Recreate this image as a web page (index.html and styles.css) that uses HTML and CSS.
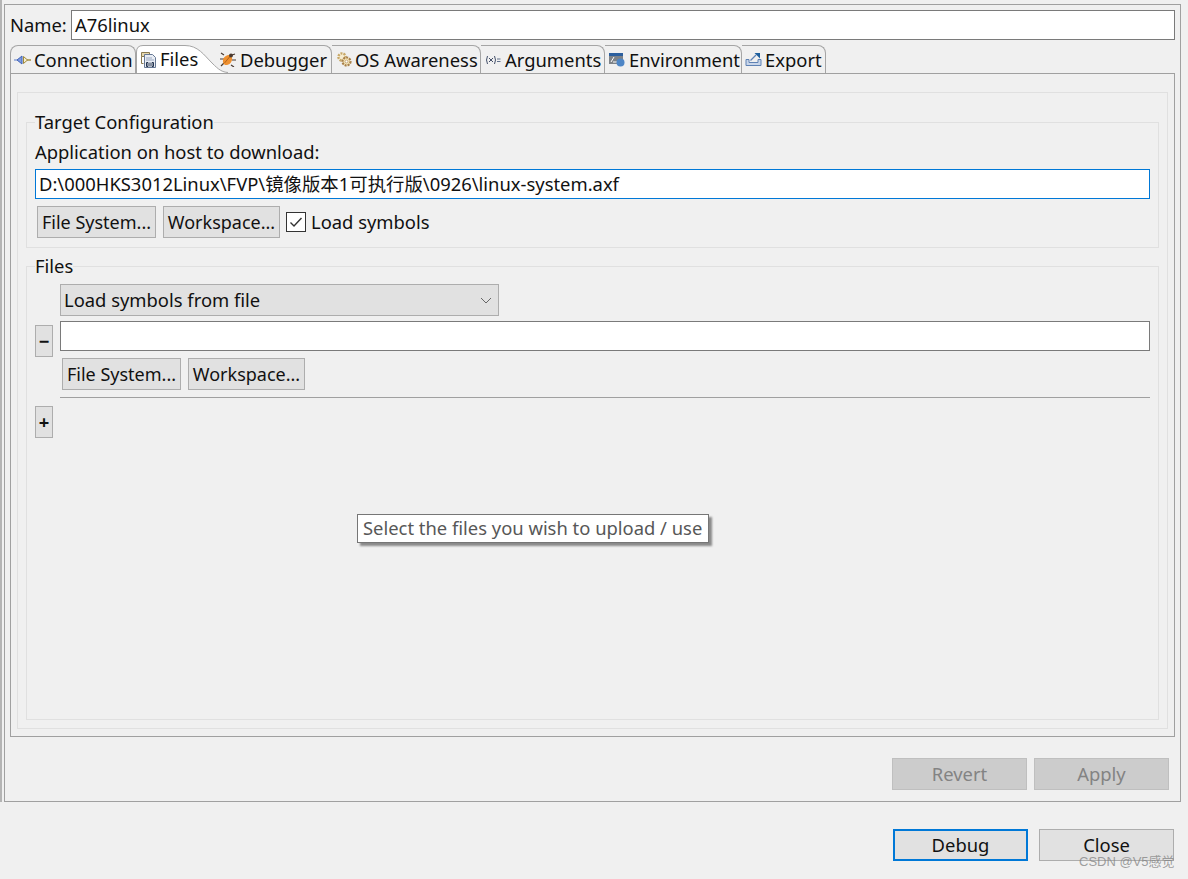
FILE: index.html
```html
<!DOCTYPE html>
<html lang="en">
<head>
<meta charset="utf-8">
<title>Debug Configuration</title>
<link rel="stylesheet" href="styles.css">
</head>
<body>
<div class="shell">
<main class="frame">
  <div class="name-row">
    <label class="name-label">Name:</label>
    <div class="field name-field">A76linux</div>
  </div>
  <div class="tabs">
    <div class="tab w-conn">
      <svg class="ico" width="17" height="10" viewBox="0 0 17 10"><path d="M0 5h3" stroke="#5a7ac8"/><path d="M8 1v8L3 5z" fill="#7f9be0" stroke="#3f62b8"/><path d="M9.500 1.500v7l4-3.500z" fill="#f7efcf" stroke="#a08a3a"/><path d="M13 5h4" stroke="#a08a3a" stroke-width="1.400"/></svg>
      <span>Connection</span>
    </div>
    <div class="tab tab-active w-files">
      <svg class="curve" width="92" height="28" viewBox="0 0 92 28"><path d="M0.500 28V7Q0.500 0.500 7 0.500H49C62 0.500 68 10 76 18C83 25 86 27 92 27.500V28Z" fill="#fff"/><path d="M0.500 28V7Q0.500 0.500 7 0.500H49C62 0.500 68 10 76 18C83 25 86 27 92 27.500" fill="none" stroke="#a5a5a5"/></svg>
      <svg class="ico" width="17" height="17" viewBox="0 0 17 17"><path d="M1.500 1.500h8v4h-8z" fill="#e6d8ae" stroke="#8a7a50"/><path d="M1.500 5.500v7h2" fill="none" stroke="#8a7a50"/><path d="M4.500 3.500h8l3 3v10h-11z" fill="#e9edf4" stroke="#667894"/><path d="M6 7h6M6 9h8" stroke="#9aa8c0"/><path d="M6.500 11.500h1.500v4h-1.500zM10 11.500v4M12 11.500h1.500v4h-1.500z" fill="none" stroke="#24344f"/></svg>
      <span>Files</span>
    </div>
    <div class="tab w-debug">
      <svg class="ico" width="16" height="15" viewBox="0 0 16 15"><path d="M4 3L1 1M0 7h4M1 14l3-3M12 3l3-1M12 8h4M11 13l3 2" stroke="#4a3a30" stroke-width="1.200"/><ellipse cx="7.500" cy="8" rx="4.200" ry="5.400" fill="#ee9030" transform="rotate(35 7.500 8)"/><circle cx="11" cy="3.500" r="2" fill="#4a3a30"/><path d="M4.500 11l5-6" stroke="#b4641c"/></svg>
      <span>Debugger</span>
    </div>
    <div class="tab w-os">
      <svg class="ico" width="17" height="17" viewBox="0 0 17 17"><circle cx="6" cy="6" r="3.600" fill="#f6ecd0" stroke="#c8a868" stroke-width="2.400" stroke-dasharray="2 1"/><circle cx="10.500" cy="10.500" r="4" fill="#f3e4b8" stroke="#a8804a" stroke-width="2.200" stroke-dasharray="2 1"/><circle cx="10.500" cy="10.500" r="1.400" fill="#fff" stroke="#a8804a" stroke-width=".6"/></svg>
      <span>OS Awareness</span>
    </div>
    <div class="tab w-args">
      <svg class="ico" width="16" height="10" viewBox="0 0 16 10"><path d="M2.500 1Q0.500 5 2.500 9M9.500 1Q11.500 5 9.500 9M4 3l4 4M8 3l-4 4" fill="none" stroke="#44506a"/><path d="M12 4h3.500M12 6.500h3.500" stroke="#60708a"/></svg>
      <span>Arguments</span>
    </div>
    <div class="tab w-env">
      <svg class="ico" width="16" height="14" viewBox="0 0 16 14"><path d="M0 0h14v11H0z" fill="#7d8288"/><path d="M0 0h14v3H0z" fill="#2c5f9e"/><path d="M2 9l3-5M4 9h4" stroke="#fff"/><circle cx="11.500" cy="9.500" r="4" fill="#4e86c6"/></svg>
      <span>Environment</span>
    </div>
    <div class="tab w-export">
      <svg class="ico" width="17" height="15" viewBox="0 0 17 15"><path d="M1 7.500V13.500H16V7.500H13V10.500H4V7.500Z" fill="#c9d6ea" stroke="#5f82b4"/><path d="M5.500 8.500L11 3" stroke="#5f82b4" stroke-width="1.200"/><path d="M9.500 1H15V6.500Z" fill="#1f5f9e"/></svg>
      <span>Export</span>
    </div>
  </div>
  <div class="panel">
    <div class="inner">
      <fieldset class="group group-target">
        <legend>Target Configuration</legend>
        <div class="line-label">Application on host to download:</div>
        <div class="field path-field focus">D:\000HKS3012Linux\FVP\镜像版本1可执行版\0926\linux-system.axf</div>
        <div class="actions">
          <button class="btn fs">File System...</button>
          <button class="btn ws">Workspace...</button>
          <span class="check-wrap">
            <span class="check"><svg width="18" height="18" viewBox="0 0 18 18"><path d="M3.500 9.500l3.500 3.500 7.500-8" fill="none" stroke="#333" stroke-width="1.400"/></svg></span>
            <span>Load symbols</span>
          </span>
        </div>
      </fieldset>
      <fieldset class="group group-files">
        <legend>Files</legend>
        <div class="entry">
          <button class="btn small minus">−</button>
          <div class="entry-body">
            <div class="select">
              <span>Load symbols from file</span>
              <svg width="12" height="7" viewBox="0 0 12 7"><path d="M1 1l5 5 5-5" fill="none" stroke="#666"/></svg>
            </div>
            <div class="field file-field"></div>
            <div class="actions sub">
              <button class="btn fs">File System...</button>
              <button class="btn ws">Workspace...</button>
            </div>
            <div class="sep"></div>
          </div>
        </div>
        <button class="btn small plus">+</button>
        <div class="tooltip">Select the files you wish to upload / use</div>
      </fieldset>
    </div>
  </div>
  <div class="apply-row">
    <button class="btn big off">Revert</button>
    <button class="btn big off">Apply</button>
  </div>
</main>
</div>
<footer class="footer">
  <button class="btn big primary">Debug</button>
  <button class="btn big">Close</button>
</footer>
<div class="watermark">CSDN @V5感觉</div>
</body>
</html>
```

FILE: styles.css
```css
* { box-sizing: border-box; }
html, body { margin: 0; height: 100%; }
body {
  width: 1188px;
  height: 879px;
  overflow: hidden;
  background: #f0f0f0;
  font-family: "Noto Sans", "Noto Sans CJK SC", sans-serif;
  font-size: 18.4px;
  line-height: 24px;
  color: #111;
  padding: 0 7px 0 0;
  position: relative;
}
.shell {
  border-left: 2px solid #b4b4b4;
  padding: 4px 0 0 2px;
}
.frame {
  height: 798px;
  border: 1px solid #a0a0a0;
  padding: 5px 5px 0 5px;
  display: flex;
  flex-direction: column;
}
.name-row { display: flex; align-items: center; gap: 4px; height: 30px; }
.name-label { width: 57px; }
.field {
  background: #fff;
  border: 1px solid #7a7a7a;
  height: 30px;
  padding: 2px 3px;
  white-space: nowrap;
}
.name-field { flex: 1; }
.tabs { display: flex; height: 28px; margin-top: 5px; position: relative; z-index: 1; }
.tab {
  display: flex;
  align-items: center;
  gap: 3px;
  padding-left: 3px;
  height: 28px;
  border: 1px solid #a5a5a5;
  border-left: 0;
  border-bottom: 0;
  border-top-right-radius: 8px;
  white-space: nowrap;
  position: relative;
}
.w-conn { width: 126px; border-left: 1px solid #a5a5a5; border-top-left-radius: 8px; }
.w-files { width: 84px; border: 0; padding-left: 4px; }
.w-debug { width: 112px; padding-left: 0; gap: 4px; }
.w-os { width: 149px; padding-left: 4px; gap: 2px; }
.w-args { width: 124px; padding-left: 4px; gap: 4px; }
.w-env { width: 137px; padding-left: 4px; gap: 4px; }
.w-export { width: 84px; padding-left: 3px; gap: 3px; }
.tab-active { z-index: 2; }
.tab-active .ico, .tab-active span { position: relative; }
.curve { position: absolute; left: 0; top: 0; }
.ico { flex: none; }
.panel {
  height: 664px;
  border: 1px solid #a0a0a0;
  padding: 18px 6px 7px 6px;
}
.inner {
  height: 100%;
  border: 1px solid #e0e0e0;
  padding: 17px 8px 8px 8px;
  display: flex;
  flex-direction: column;
  gap: 6px;
}
.group {
  margin: 0;
  min-width: 0;
  border: 1px solid #e0e0e0;
  padding: 0 8px;
}
.group legend { padding: 0; line-height: 24px; height: 24px; }
.group-target { height: 138px; flex: none; }
.group-files { flex: 1; position: relative; }
.line-label { height: 24px; margin-top: 6px; }
.path-field { margin-top: 5px; }
.focus { border-color: #0078d7; }
.actions { display: flex; align-items: center; gap: 7px; margin-top: 7px; padding-left: 2px; }
.sub { margin-top: 7px; padding-left: 2px; }
.btn {
  font: inherit;
  color: inherit;
  background: #e1e1e1;
  border: 1px solid #adadad;
  height: 32px;
  padding: 0;
  flex: none;
}
.fs, .ws { font-size: 18px; }
.fs { width: 119px; }
.ws { width: 117px; }
.check-wrap { display: flex; align-items: center; gap: 5px; margin-left: -1px; }
.check { width: 20px; height: 20px; border: 1px solid #333; background: #fff; display: flex; }
.entry { display: flex; align-items: center; gap: 7px; margin-top: 6px; }
.entry-body { flex: 1; }
.small { width: 18px; font-weight: 700; line-height: 24px; }
.select {
  width: 439px;
  height: 32px;
  background: #e1e1e1;
  border: 1px solid #adadad;
  display: flex;
  align-items: center;
  justify-content: space-between;
  padding: 0 6px 0 3px;
}
.file-field { margin-top: 5px; }
.sep { height: 1px; background: #a0a0a0; margin-top: 7px; }
.plus { margin-top: 8px; display: block; }
.tooltip {
  position: absolute;
  left: 330px;
  top: 236px;
  width: 352px;
  height: 29px;
  padding: 1px 5px;
  background: #fff;
  border: 1px solid #767676;
  color: #575757;
  white-space: nowrap;
  box-shadow: 3px 3px 2px #8a8a8a;
}
.apply-row { display: flex; justify-content: flex-end; gap: 7px; padding: 21px 6px 0 0; }
.big { width: 135px; }
.off { background: #cccccc; border-color: #bfbfbf; color: #838383; }
.footer { display: flex; justify-content: flex-end; gap: 11px; padding: 27px 7px 0 0; }
.primary { border: 2px solid #0078d7; }
.watermark {
  position: absolute;
  left: 1079px;
  top: 853px;
  font-family: "Liberation Sans", "Noto Sans CJK SC", sans-serif;
  font-size: 13px;
  line-height: 18px;
  color: rgba(130,130,130,.75);
  white-space: nowrap;
}
```
